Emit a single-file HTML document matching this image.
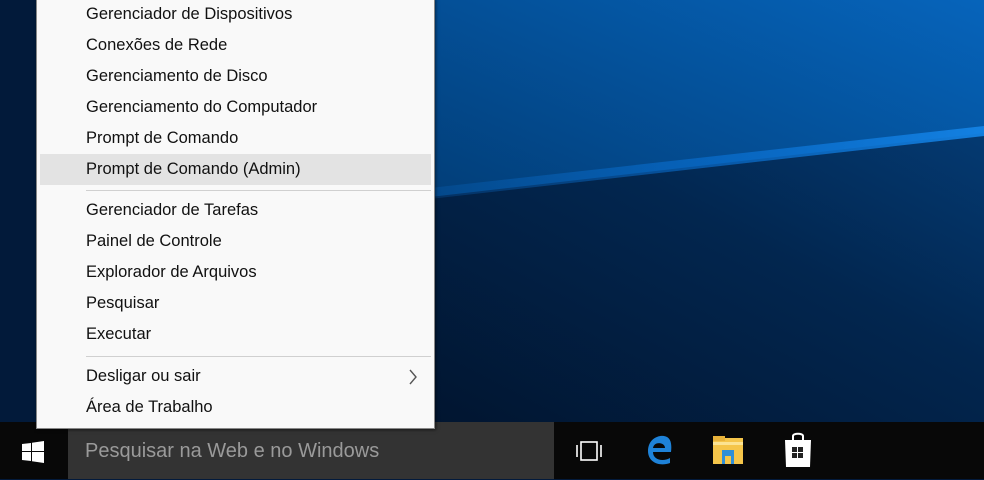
<!DOCTYPE html>
<html><head><meta charset="utf-8"><style>
*{margin:0;padding:0;box-sizing:border-box}
body{width:984px;height:479px;overflow:hidden;position:relative;font-family:"Liberation Sans",sans-serif;background:#021a3c}
#bg{position:absolute;left:0;top:0;width:984px;height:422px}
#menu{position:absolute;z-index:5;left:36px;top:-2px;width:399px;height:431px;background:#f9f9f9;border:1px solid #888;box-shadow:1px 1px 3px rgba(0,0,0,.5)}
.it{position:absolute;left:49px;font-size:16.5px;color:#111;height:31px;line-height:31px}
.hl{position:absolute;left:3px;width:391px;top:155px;height:31px;background:#e3e3e3}
.sep{position:absolute;left:49px;width:345px;height:1px;background:#d0d0d0}
#tb{position:absolute;left:0;top:422px;width:984px;height:57px;background:#080808}
#search{position:absolute;left:68px;top:0;width:486px;height:57px;background:#333;color:#9a9a9a;font-size:20px;line-height:58px;padding-left:17px}
</style></head><body>
<svg id="bg" viewBox="0 0 984 422">
<defs>
<linearGradient id="g1" x1="0" y1="1" x2="1" y2="0"><stop offset="0" stop-color="#011633"/><stop offset=".5" stop-color="#023f7a"/><stop offset="1" stop-color="#0664bb"/></linearGradient>
<linearGradient id="g2" x1="0" y1="1" x2="1" y2="0"><stop offset="0" stop-color="#011530"/><stop offset=".6" stop-color="#02264f"/><stop offset="1" stop-color="#043a72"/></linearGradient>
<linearGradient id="beam" x1="0" y1="0" x2="1" y2="0"><stop offset="0" stop-color="#0a6fd0" stop-opacity="0.2"/><stop offset=".5" stop-color="#0a73d8" stop-opacity=".6"/><stop offset="1" stop-color="#1585e8" stop-opacity=".9"/></linearGradient>
</defs>
<rect width="984" height="422" fill="url(#g1)"/>
<polygon points="430,197 984,133 984,422 430,422" fill="url(#g2)"/>
<polygon points="430,188 984,126 984,136 430,199" fill="url(#beam)"/>
<rect x="0" y="0" width="430" height="422" fill="#021a3a"/>
</svg>
<div id="menu">
<div class="hl"></div>
<div class="it" style="top:0px">Gerenciador de Dispositivos</div>
<div class="it" style="top:31px">Conexões de Rede</div>
<div class="it" style="top:62px">Gerenciamento de Disco</div>
<div class="it" style="top:93px">Gerenciamento do Computador</div>
<div class="it" style="top:124px">Prompt de Comando</div>
<div class="it" style="top:155px">Prompt de Comando (Admin)</div>
<div class="sep" style="top:191px"></div>
<div class="it" style="top:196px">Gerenciador de Tarefas</div>
<div class="it" style="top:227px">Painel de Controle</div>
<div class="it" style="top:258px">Explorador de Arquivos</div>
<div class="it" style="top:289px">Pesquisar</div>
<div class="it" style="top:320px">Executar</div>
<div class="sep" style="top:357px"></div>
<div class="it" style="top:362px">Desligar ou sair</div>
<svg style="position:absolute;left:371px;top:370px" width="10" height="16"><path d="M2 1 L8 8 L2 15" stroke="#555" stroke-width="1.4" fill="none"/></svg>
<div class="it" style="top:393px">Área de Trabalho</div>
</div>
<div id="tb">
<svg style="position:absolute;left:22px;top:19px" width="22" height="22"><path d="M0 3 L9 2 V10 H0Z M10 1.8 L22 0 V10 H10Z M0 11 H9 V20 L0 19Z M10 11 H22 V22 L10 20.2Z" fill="#fff"/></svg>
<div id="search">Pesquisar na Web e no Windows</div>
<svg style="position:absolute;left:575px;top:19px" width="30" height="20"><rect x="6" y="1" width="16" height="18" fill="none" stroke="#fff" stroke-width="1.6"/><path d="M2 4 V16 M26 4 V16" stroke="#fff" stroke-width="1.6"/></svg>
<svg style="position:absolute;left:645px;top:12px" width="30" height="32"><path d="M26 18 H8 C8 26 18 28 25 24 V29 C14 33 3 28 3 17 C3 6 12 1 19 2 C26 3 27 10 26 18Z M8 14 H20 C20 8 9 7 8 14Z" fill="#1e82d8"/></svg>
<svg style="position:absolute;left:713px;top:14px" width="32" height="30"><rect x="0" y="2" width="30" height="26" fill="#f5c54a"/><rect x="0" y="0" width="12" height="5" fill="#e8b23a"/><rect x="0" y="6" width="30" height="3" fill="#fff0b0" opacity=".7"/><rect x="9" y="14" width="12" height="14" fill="#2f8fd8"/><rect x="12" y="20" width="6" height="8" fill="#f5c54a"/></svg>
<svg style="position:absolute;left:783px;top:10px" width="30" height="36"><path d="M10 8 V4 C10 1 20 1 20 4 V8" stroke="#fff" stroke-width="2" fill="none"/><path d="M2 8 H28 L27 35 H3Z" fill="#fff"/><rect x="9" y="15" width="5" height="5" fill="#222"/><rect x="15" y="15" width="5" height="5" fill="#222"/><rect x="9" y="21" width="5" height="5" fill="#222"/><rect x="15" y="21" width="5" height="5" fill="#222"/></svg>
</div>
</body></html>
